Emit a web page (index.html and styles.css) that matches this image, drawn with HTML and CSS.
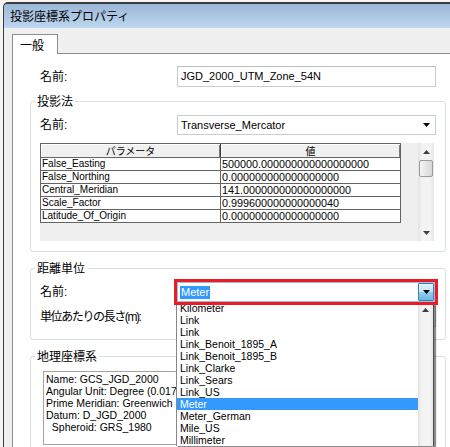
FILE: index.html
```html
<!DOCTYPE html>
<html lang="ja">
<head>
<meta charset="utf-8">
<title>投影座標系プロパティ</title>
<link rel="stylesheet" href="styles.css">
</head>
<body>
<div class="window">
  <div class="titlebar">投影座標系プロパティ</div>
  <div class="frame">
    <div class="tabs">
      <div class="tab">一般</div>
      <div class="tab-rest"></div>
    </div>
    <div class="panel">
      <div class="row top-row">
        <span class="label">名前:</span>
        <div class="textbox">JGD_2000_UTM_Zone_54N</div>
      </div>

      <fieldset class="group g1">
        <legend>投影法</legend>
        <div class="row combo-row">
          <span class="label">名前:</span>
          <div class="combo">
            <span>Transverse_Mercator</span>
            <svg class="arrow" width="7" height="4" viewBox="0 0 7 4"><path d="M0 0H7L3.5 4Z" fill="#000"/></svg>
          </div>
        </div>
        <div class="grid">
          <div class="tbl">
            <div class="hdr">
              <div class="hc c1">パラメータ</div>
              <div class="hc c2">値</div>
            </div>
            <div class="tr"><div class="td c1">False_Easting</div><div class="td c2 num">500000.000000000000000000</div></div>
            <div class="tr"><div class="td c1">False_Northing</div><div class="td c2 num">0.000000000000000000</div></div>
            <div class="tr"><div class="td c1">Central_Meridian</div><div class="td c2 num">141.000000000000000000</div></div>
            <div class="tr"><div class="td c1">Scale_Factor</div><div class="td c2 num">0.999600000000000040</div></div>
            <div class="tr"><div class="td c1">Latitude_Of_Origin</div><div class="td c2 num">0.000000000000000000</div></div>
          </div>
          <div class="vscroll">
            <div class="sbtn"><svg width="7" height="4" viewBox="0 0 7 4"><path d="M0 4H7L3.5 0Z" fill="#3d3d3d"/></svg></div>
            <div class="thumb"></div>
            <div class="track"></div>
            <div class="sbtn"><svg width="7" height="4" viewBox="0 0 7 4"><path d="M0 0H7L3.5 4Z" fill="#3d3d3d"/></svg></div>
          </div>
        </div>
      </fieldset>

      <fieldset class="group g2">
        <legend>距離単位</legend>
        <div class="row combo-row">
          <span class="label">名前:</span>
          <div class="combo edit">
            <span class="sel">Meter</span>
            <span class="dropbtn"><svg width="7" height="4" viewBox="0 0 7 4"><path d="M0 0H7L3.5 4Z" fill="#000"/></svg></span>
            <div class="popup">
              <div class="items">
                <div class="item">Kilometer</div>
                <div class="item">Link</div>
                <div class="item">Link</div>
                <div class="item">Link_Benoit_1895_A</div>
                <div class="item">Link_Benoit_1895_B</div>
                <div class="item">Link_Clarke</div>
                <div class="item">Link_Sears</div>
                <div class="item">Link_US</div>
                <div class="item selected">Meter</div>
                <div class="item">Meter_German</div>
                <div class="item">Mile_US</div>
                <div class="item">Millimeter</div>
              </div>
              <div class="vscroll list-scroll">
                <div class="sbtn"><svg width="7" height="4" viewBox="0 0 7 4"><path d="M0 4H7L3.5 0Z" fill="#3d3d3d"/></svg></div>
                <div class="track"></div>
              </div>
            </div>
          </div>
        </div>
        <div class="row len-row">
          <span class="label narrow">単位あたりの長さ(m):</span>
          <div class="textbox"></div>
        </div>
      </fieldset>

      <fieldset class="group g3">
        <legend>地理座標系</legend>
        <div class="memo">Name: GCS_JGD_2000
Angular Unit: Degree (0.0174532925199433)
Prime Meridian: Greenwich (0.0)
Datum: D_JGD_2000
  Spheroid: GRS_1980</div>
      </fieldset>
    </div>
  </div>
</div>
</body>
</html>
```
FILE: styles.css
```css
* { box-sizing: border-box; }
html, body { margin: 0; padding: 0; }
body {
  width: 450px;
  height: 447px;
  overflow: hidden;
  background: #f4f4f4;
  color: #000;
  font-family: "Liberation Sans", "Noto Sans CJK JP", sans-serif;
  font-size: 12px;
}
.window {
  margin: 2px 0 0 3px;
  width: 447px;
  height: 445px;
  border-top: 2px solid #3b3b3b;
  border-left: 1px solid #3b3b3b;
  border-top-left-radius: 5px;
  background: #f0f0f0;
  overflow: hidden;
}
.titlebar {
  height: 24px;
  line-height: 24px;
  padding-left: 6px;
  background: linear-gradient(#9ab7d7, #bfd7ef);
  font-family: "Noto Sans CJK JP", sans-serif;
  font-size: 12px;
}
.frame { padding-left: 8px; }
.tabs {
  display: flex;
  align-items: flex-end;
  height: 26px;
}
.tab {
  width: 46px;
  height: 20px;
  border: 1px solid #898c95;
  border-bottom: none;
  background: #fff;
  padding-left: 7px;
  font-family: "Noto Sans CJK JP", sans-serif;
  font-size: 12px;
  line-height: 19px;
}
.tab-rest {
  flex: 1;
  height: 26px;
  border-bottom: 1px solid #898c95;
}
.panel {
  border-left: 1px solid #898c95;
  background: #fff;
  height: 393px;
  padding-top: 12px;
}
.row { display: flex; align-items: center; }
.label {
  flex: none;
  width: 137px;
  font-family: "Liberation Sans", "Noto Sans CJK JP", sans-serif;
  font-size: 12px;
  line-height: 14px;
}
.label.narrow { letter-spacing: -1.4px; }
.top-row { padding-left: 27px; height: 21px; }
.textbox {
  width: 259px;
  height: 21px;
  border: 1px solid #c7cbd2;
  border-top-color: #b9bdc5;
  background: #fff;
  padding-left: 3px;
  font-size: 11px;
  line-height: 19px;
  white-space: nowrap;
}
.group {
  margin: 7px 0 0 17px;
  width: 416px;
  min-width: 0;
  border: 1px solid #d5dfe5;
  border-radius: 3px;
  padding: 7px 9px 10px 4px;
}
.group legend {
  padding: 0 2px;
  margin-left: 0;
  font-family: "Noto Sans CJK JP", sans-serif;
  font-size: 12px;
  line-height: 14px;
}
.group .row, .group .grid { margin-left: 5px; }
.combo-row { height: 20px; }
.combo {
  width: 259px;
  height: 20px;
  border: 1px solid #c7cbd2;
  background: #fff;
  display: flex;
  align-items: center;
  justify-content: space-between;
  padding: 0 5px 0 3px;
  font-size: 11px;
  white-space: nowrap;
}
.arrow { display: block; }

/* grid */
.grid {
  margin-top: 8px;
  width: 394px;
  height: 98px;
  background: #efefef;
  display: flex;
  justify-content: space-between;
}
.tbl {
  align-self: flex-start;
  width: 361px;
  border: 1px solid #646464;
  border-bottom: none;
  background: #fff;
}
.hdr {
  display: flex;
  height: 14px;
  border-bottom: 1px solid #646464;
  background: #f0f0f0;
}
.hc {
  font-family: "Noto Sans CJK JP", sans-serif;
  font-size: 10px;
  line-height: 13px;
  text-align: center;
  box-shadow: inset 1px 1px 0 #fff, inset -1px 0 0 #7a7a7a;
}
.hdr .c1 { width: 180px; border-right: 1px solid #3a3a3a; }
.hdr .c2 { width: 179px; }
.tr {
  display: flex;
  height: 13px;
  border-bottom: 1px solid #646464;
}
.td {
  font-size: 10px;
  line-height: 12px;
  padding-left: 1px;
  white-space: nowrap;
  overflow: hidden;
}
.td.num { font-size: 10.8px; }
.tr .c1 { width: 180px; border-right: 1px solid #646464; }
.tr .c2 { width: 179px; }

.vscroll {
  flex: none;
  width: 16px;
  display: flex;
  flex-direction: column;
  background: linear-gradient(to right, #e3e3e3, #f3f3f3 25%, #f3f3f3 75%, #e8e8e8);
}
.sbtn {
  height: 17px;
  display: flex;
  align-items: center;
  justify-content: center;
}
.sbtn svg { display: block; }
.thumb {
  height: 17px;
  margin: 0 1px;
  border: 1px solid #9a9a9a;
  border-radius: 2px;
  background: linear-gradient(to right, #f4f4f4, #e6e6e6 50%, #d6d6d6);
}
.track { flex: 1; }

/* editable combo with highlight */
.combo.edit {
  position: relative;
  width: 258px;
  padding: 0;
  padding-left: 2px;
  border-color: #98bfe3;
  overflow: visible;
}
.sel {
  background: #3399ff;
  color: #fff;
  padding: 0 1px;
  line-height: 13px;
}
.dropbtn {
  align-self: stretch;
  width: 16px;
  border: 1px solid #3c7fb1;
  border-radius: 1px;
  background: linear-gradient(#e3f4fc, #c2e4f6 48%, #94cdee 52%, #6fb6e0);
  display: flex;
  align-items: center;
  justify-content: center;
}
.combo.edit::after {
  content: "";
  position: absolute;
  left: -4px;
  top: -4px;
  right: -4px;
  bottom: -4px;
  border: 3px solid #ea1c26;
  z-index: 3;
}
.popup {
  position: absolute;
  left: -2px;
  top: 19px;
  width: 258px;
  height: 144px;
  z-index: 2;
  display: flex;
  background: #fff;
  border-left: 1px solid #828790;
  border-right: 1px solid #4a4a4a;
  box-shadow: 2px 1px 1px rgba(0, 0, 0, 0.45);
}
.items { flex: 1; overflow: hidden; }
.item {
  height: 12px;
  line-height: 12px;
  padding-left: 3px;
  font-size: 10.5px;
  white-space: nowrap;
}
.item.selected { background: #3399ff; color: #fff; }
.list-scroll { width: 15px; }
.list-scroll .sbtn { height: 16px; }
.len-row { margin-top: 4px; height: 21px; }
.g2 { margin-top: 9px; padding-bottom: 12px; }
.g3 { margin-top: 9px; padding-top: 8px; }
.g3 .memo {
  margin-left: 8px;
  width: 134px;
  height: 74px;
  border: 1px solid #a3a3a3;
  border-right-color: transparent;
  background: #fff;
  padding: 1px 0 1px 2px;
  font-size: 10.5px;
  line-height: 12px;
  white-space: pre;
  overflow: hidden;
}
```
